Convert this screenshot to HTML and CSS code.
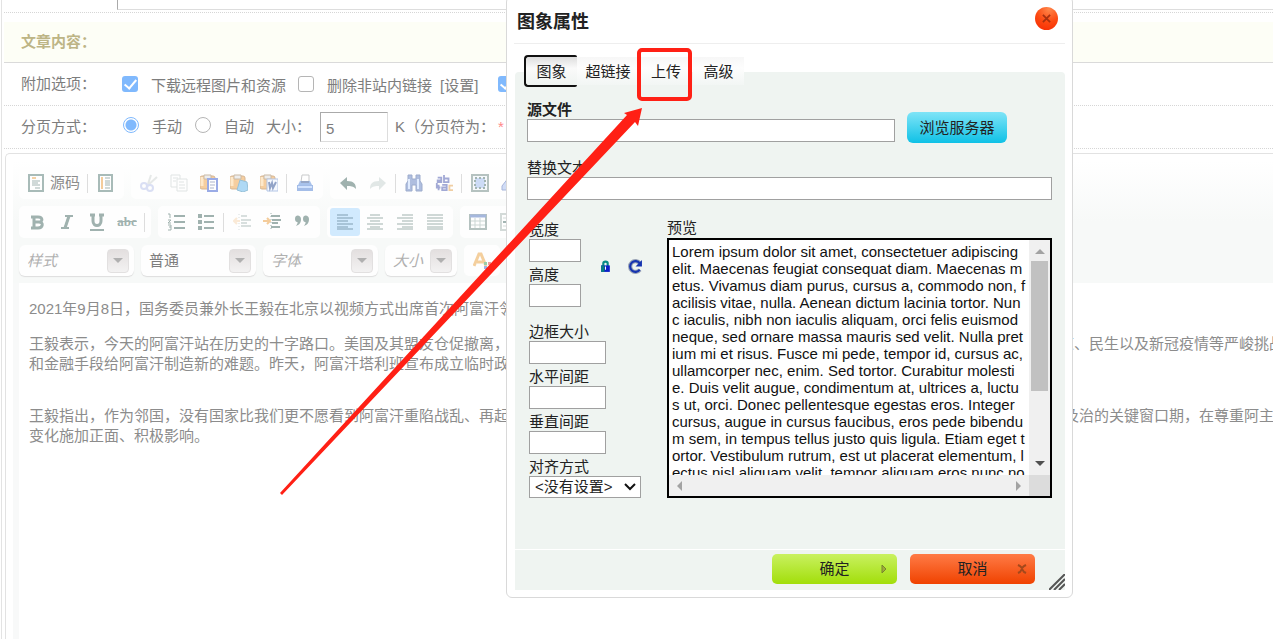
FILE: index.html
```html
<!DOCTYPE html>
<html lang="zh-CN">
<head>
<meta charset="utf-8">
<title>图象属性</title>
<link rel="stylesheet" href="styles.css">
</head>
<body>
<main class="page">
  <div class="top-row"><div class="top-field"></div></div>
  <h2 class="section-title">文章内容：</h2>
  <div class="option-row">
    <span class="option-name">附加选项：</span>
    <input class="check" type="checkbox" id="fetch" checked><label class="opt-fetch" for="fetch">下载远程图片和资源</label>
    <input class="check" type="checkbox" id="strip"><label class="opt-strip" for="strip">删除非站内链接</label>
    <a class="setting" href="#">[设置]</a>
    <input class="check" type="checkbox" id="extra" aria-label="其他" checked>
  </div>
  <div class="option-row">
    <span class="option-name">分页方式：</span>
    <input class="radio" type="radio" name="paging" id="manual" checked><label class="opt-radio" for="manual">手动</label>
    <input class="radio" type="radio" name="paging" id="auto"><label class="opt-radio" for="auto">自动</label>
    <label class="opt-size" for="size">大小：</label>
    <input class="size-input" id="size" type="text" value="5">
    <span class="size-unit">K（分页符为：</span><span class="mark">*</span>
  </div>

  <section class="editor">
    <div class="toolbars">
      <div class="toolbar">
        <div class="group">
          <button class="tool source"><svg viewBox="0 0 18 18"><path d="M2 1h14v16H2z" fill="#fff" stroke="#557a75" stroke-width="2"/><path d="M5 4h4" stroke="#eaa550" stroke-width="2"/><path d="M5 7h8M5 9h6M5 11h8M8 14h5" stroke="#486d69"/></svg>源码</button>
          <i class="sep"></i>
          <button class="tool" aria-label="模板"><svg viewBox="0 0 18 18"><path d="M2 1h13v16H2z" fill="#fff" stroke="#557a75" stroke-width="2"/><path d="M5 3v12" stroke="#eb9b3b" stroke-width="2"/><path d="M8 4h5M8 7h5M8 9h5M8 11h5M8 14h5" stroke="#486d69"/></svg></button>
        </div>
        <div class="group">
          <button class="tool dim" aria-label="剪切"><svg viewBox="0 0 18 18"><path d="M11 1L8 10M17 3L7 12" stroke="#8b9794" stroke-width="2"/><circle cx="4" cy="12" r="3" fill="none" stroke="#4d66cd" stroke-width="2"/><circle cx="10" cy="14" r="3" fill="none" stroke="#4d66cd" stroke-width="2"/></svg></button>
          <button class="tool dim" aria-label="复制"><svg viewBox="0 0 18 18" fill="#fff" stroke="#708580"><path d="M1 1h9v12H1z"/><path d="M7 5h10v12H7z"/><path d="M3 4h5M3 7h3M9 8h5M9 11h6M9 14h6"/></svg></button>
          <button class="tool" aria-label="粘贴"><svg viewBox="0 0 18 18"><rect x="0" y="2" width="15" height="13" rx="2" fill="#ef9f42" stroke="#ad7130"/><path d="M2 3v9" stroke="#ffd599" stroke-width="3"/><path d="M4 1h7v4H4z" fill="#ddd" stroke="#99794f"/><path d="M8 5h9v12H8z" fill="#fff" stroke="#395bd0" stroke-width="2"/><path d="M10 8h5M10 11h5M10 14h4" stroke="#5d6d9b"/></svg></button>
          <button class="tool" aria-label="粘贴为文本"><svg viewBox="0 0 18 18"><rect x="0" y="2" width="15" height="13" rx="2" fill="#ef9f42" stroke="#ad7130"/><path d="M2 3v9" stroke="#ffd599" stroke-width="3"/><path d="M4 1h7v4H4z" fill="#ddd" stroke="#99794f"/><path d="M10 6l7 2 1 8-5 2-6-2z" fill="#63b6ee" stroke="#3285b4"/></svg></button>
          <button class="tool" aria-label="从 Word 粘贴"><svg viewBox="0 0 18 18"><rect x="0" y="2" width="15" height="13" rx="2" fill="#ef9f42" stroke="#ad7130"/><path d="M2 3v9" stroke="#ffd599" stroke-width="3"/><path d="M4 1h7v4H4z" fill="#ddd" stroke="#99794f"/><path d="M7 5h11v12H7z" fill="#f0f5ff" stroke="#6b8fd0"/><path d="M9 8l1 6 2-5 1 5 3-6" fill="none" stroke="#284c94" stroke-width="2"/></svg></button>
          <i class="sep"></i>
          <button class="tool" aria-label="打印"><svg viewBox="0 0 18 18"><path d="M6 1h7v7H5z" fill="#fff" stroke="#96989b"/><path d="M4 7h10l3 6H1z" fill="#5588d9"/><path d="M5 8h8" stroke="#335291" stroke-width="2"/><path d="M1 11h16v6H1z" fill="#4d7ed3"/><path d="M2 13h14" stroke="#a8c9ff" stroke-width="2"/></svg></button>
        </div>
        <div class="group">
          <button class="tool" aria-label="撤销"><svg viewBox="0 0 18 18"><path d="M1 9l7-6v4c7 0 9 3 9 8-3-3-5-3-9-3v4z" fill="#446963"/></svg></button>
          <button class="tool dim" aria-label="重做"><svg viewBox="0 0 18 18"><path d="M17 9l-7-6v4c-7 0-9 3-9 8 3-3 5-3 9-3v4z" fill="#71918b"/></svg></button>
          <i class="sep"></i>
          <button class="tool" aria-label="查找"><svg viewBox="0 0 18 18"><path d="M3 1h4v4h4V1h4v6l2 3v7h-6v-6H7v6H1v-7l2-3z" fill="#637fc2" stroke="#415e9c"/><path d="M4 5v10M13 5v10" stroke="#c6dbff" stroke-width="2"/></svg></button>
          <button class="tool" aria-label="替换"><svg viewBox="0 0 20 18" fill="none" stroke="#4856ad" stroke-width="2"><path d="M3 3h4v5H3V6h4M10 0v8h5V4h-5M8 11h5v6H8v-3h5M2 9v5h4M4 11v6"/><path d="M20 12h-4v5h4" stroke="#e4a04a"/></svg></button>
          <i class="sep"></i>
          <button class="tool" aria-label="全选"><svg viewBox="0 0 18 18"><path d="M1 1h16v16H1z" fill="#edf3fa" stroke="#6f8883" stroke-width="2"/><path d="M4 4h10v10H4z" fill="#9cb9ef" stroke="#486d69" stroke-width="2" stroke-dasharray="2 2"/></svg></button>
          <button class="tool" aria-label="清除格式"><svg viewBox="0 0 18 18"><path d="M1 12L8 3l9 4-6 9H1z" fill="#a4bbef" stroke="#526eb9"/></svg></button>
        </div>
      </div>
      <div class="toolbar">
        <div class="group">
          <button class="tool" aria-label="加粗"><svg viewBox="0 0 18 18"><path d="M3 4h7c5 0 5 5 1 5 5 0 4 6-1 6H3M6 3v12M6 9h5" fill="none" stroke="#446963" stroke-width="3"/></svg></button>
          <button class="tool" aria-label="倾斜"><svg viewBox="0 0 18 18"><path d="M7 3h8M3 15h8M11 3L7 15" stroke="#446963" stroke-width="2"/><path d="M11 3L7 15" stroke="#446963" stroke-width="3"/></svg></button>
          <button class="tool" aria-label="下划线"><svg viewBox="0 0 18 18"><path d="M5 2v6c0 6 8 6 8 0V2M2 2h5M11 2h5" fill="none" stroke="#446963" stroke-width="3"/><path d="M2 17h14" stroke="#446963" stroke-width="2"/></svg></button>
          <button class="tool" aria-label="删除线"><s class="strike">abc</s></button>
          <i class="sep"></i>
        </div>
        <div class="group">
          <button class="tool" aria-label="编号列表"><svg viewBox="0 0 18 18" fill="none" stroke="#446963"><path d="M7 3h11M7 9h11M7 15h11" stroke-width="2"/><path d="M1 1h2v4M1 7h3L1 10h3M1 12h3v5H1M2 14h2"/></svg></button>
          <button class="tool" aria-label="项目列表"><svg viewBox="0 0 18 18" stroke="#446963"><path d="M7 3h10M7 9h10M7 15h10" stroke-width="2"/><path d="M1 3h4M1 9h4M1 15h4" stroke-width="4"/></svg></button>
          <i class="sep"></i>
          <button class="tool dim" aria-label="减少缩进"><svg viewBox="0 0 18 18"><path d="M8 3h6M8 7h10M8 10h6M8 13h10" stroke="#446963" stroke-width="2"/><path d="M6 1v16" stroke="#446963" stroke-dasharray="1 2"/><path d="M7 8H1M4 5L1 8l3 3" fill="none" stroke="#eb9b3b" stroke-width="2"/></svg></button>
          <button class="tool" aria-label="增加缩进"><svg viewBox="0 0 18 18"><path d="M8 3h9M9 7h9M9 10h6M8 14h9" stroke="#446963" stroke-width="2"/><path d="M8 0v18" stroke="#446963" stroke-dasharray="1 2"/><path d="M0 8h6M4 5l3 3-3 3" fill="none" stroke="#eb9b3b" stroke-width="2"/></svg></button>
          <button class="tool" aria-label="引用"><svg viewBox="0 0 18 18" fill="#446963"><path d="M2 6c0-5 6-4 6 0 0 4-2 6-5 7 2-3 2-4 1-4-1 0-2-1-2-3M10 6c0-5 6-4 6 0 0 4-2 6-5 7 2-3 2-4 1-4-1 0-2-1-2-3"/></svg></button>
        </div>
        <div class="group">
          <button class="tool on" aria-label="左对齐"><svg viewBox="0 0 18 18"><path d="M1 2h11M1 5h16M1 8h11M1 11h16M1 14h11M1 16h16" stroke="#31546a"/></svg></button>
          <button class="tool" aria-label="居中"><svg viewBox="0 0 18 18"><path d="M4 2h10M1 5h16M4 8h10M1 11h16M4 14h10M1 16h16" stroke="#446963"/></svg></button>
          <button class="tool" aria-label="右对齐"><svg viewBox="0 0 18 18"><path d="M6 2h11M1 5h16M6 8h11M1 11h16M6 14h11M1 16h16" stroke="#446963"/></svg></button>
          <button class="tool" aria-label="两端对齐"><svg viewBox="0 0 18 18"><path d="M1 2h16M1 5h16M1 8h16M1 11h16M1 14h16M1 16h16" stroke="#446963"/></svg></button>
        </div>
        <div class="group">
          <button class="tool" aria-label="表格"><svg viewBox="0 0 18 18"><path d="M1 2h16v14H1z" fill="#fff" stroke="#6f8883" stroke-width="2"/><path d="M1 3h16" stroke="#4e72be" stroke-width="3"/><path d="M2 8h14M2 12h14M6 5v10M11 5v10" stroke="#9bb0ac"/></svg></button>
          <button class="tool" aria-label="水平线"><svg viewBox="0 0 18 18"><path d="M2 1h14v16H2z" fill="#fff" stroke="#aab7b4" stroke-width="2"/><path d="M4 5h9M4 13h9" stroke="#aab7b4"/><path d="M4 9h10" stroke="#486d69" stroke-width="2"/></svg></button>
        </div>
      </div>
      <div class="toolbar combos">
        <button class="combo"><em>样式</em><span class="drop"></span></button>
        <button class="combo"><span>普通</span><span class="drop"></span></button>
        <button class="combo"><em>字体</em><span class="drop"></span></button>
        <button class="combo small"><em>大小</em><span class="drop"></span></button>
        <div class="group">
          <button class="tool" aria-label="文本颜色"><svg viewBox="0 0 18 18"><path d="M1 14L6 2h2l5 12M4 10h6" fill="none" stroke="#eba13e" stroke-width="3"/><path d="M11 10h3v3h-3z" fill="#3c9d54"/><path d="M15 10h3v3h-3z" fill="#df4343"/><path d="M11 14h3v3h-3z" fill="#406bd0"/></svg></button>
        </div>
      </div>
    </div>
    <article class="content">
      <p><span>2021年9月8日，国务委员兼外长王毅在北京以视频方式出席首次阿富汗邻</span></p>
      <p><span>王毅表示，今天的阿富汗站在历史的十字路口。美国及其盟友仓促撤离，</span><span>道、民生以及新冠疫情等严峻挑战</span></p>
      <p class="next-line"><span>和金融手段给阿富汗制造新的难题。昨天，阿富汗塔利班宣布成立临时政</span></p>
      <p class="later"><span>王毅指出，作为邻国，没有国家比我们更不愿看到阿富汗重陷战乱、再起</span><span>及治的关键窗口期，在尊重阿主</span></p>
      <p class="next-line"><span>变化施加正面、积极影响。</span></p>
    </article>
  </section>
</main>

<div class="dialog" role="dialog" aria-labelledby="dialog-title">
  <header class="dialog-head">
    <h1 id="dialog-title">图象属性</h1>
    <button class="close" aria-label="关闭"><svg viewBox="0 0 10 10"><path d="M1 1l8 8M9 1l-8 8" stroke="#a8300f" stroke-width="2"/></svg></button>
  </header>
  <nav class="tabs">
    <button class="tab active">图象</button><button class="tab link-tab">超链接</button><button class="tab upload-tab">上传</button><button class="tab">高级</button>
  </nav>
  <div class="panel">
    <div class="url-row">
      <div class="field"><label class="strong" for="url">源文件</label><input id="url" type="text"></div>
      <button class="browse">浏览服务器</button>
    </div>
    <div class="field alt-field"><label for="alt">替换文本</label><input id="alt" type="text"></div>
    <div class="columns">
      <div class="metrics">
        <div class="dims">
          <div>
            <div class="field narrow"><label for="w">宽度</label><input id="w" type="text"></div>
            <div class="field narrow"><label for="h">高度</label><input id="h" type="text"></div>
          </div>
          <button class="mini" aria-label="锁定比例"><svg viewBox="0 0 10 12"><path d="M3 6V3c0-2 4-2 4 0v3" fill="none" stroke="#078b87" stroke-width="2"/><path d="M1 5h8v6H1z" fill="#0b1ec8"/><path d="M1 5h3v6H1z" fill="#087f80"/><path d="M5 6v3" stroke="#fff"/></svg></button>
          <button class="mini reset" aria-label="原始尺寸"><svg viewBox="0 0 14 14"><path d="M11 10a5 5 0 1 1 0-6" fill="none" stroke="#9aa4b6" stroke-width="4"/><path d="M11 10a5 5 0 1 1 0-6" fill="none" stroke="#1634b0" stroke-width="2"/><path d="M13 1v6H7z" fill="#1634b0"/></svg></button>
        </div>
        <div class="field wide"><label for="border">边框大小</label><input id="border" type="text"></div>
        <div class="field wide"><label for="hs">水平间距</label><input id="hs" type="text"></div>
        <div class="field wide"><label for="vs">垂直间距</label><input id="vs" type="text"></div>
        <div class="field"><label for="align">对齐方式</label>
          <div class="select-wrap"><select id="align"><option>&lt;没有设置&gt;</option></select><svg viewBox="0 0 12 8"><path d="M1 1l5 5 5-5" fill="none" stroke="#111" stroke-width="2"/></svg></div>
        </div>
      </div>
      <div class="preview-col">
        <div class="preview-label">预览</div>
        <div class="preview">
          <div class="preview-text">Lorem ipsum dolor sit amet, consectetuer adipiscing
elit. Maecenas feugiat consequat diam. Maecenas m
etus. Vivamus diam purus, cursus a, commodo non, f
acilisis vitae, nulla. Aenean dictum lacinia tortor. Nun
c iaculis, nibh non iaculis aliquam, orci felis euismod
neque, sed ornare massa mauris sed velit. Nulla pret
ium mi et risus. Fusce mi pede, tempor id, cursus ac,
ullamcorper nec, enim. Sed tortor. Curabitur molesti
e. Duis velit augue, condimentum at, ultrices a, luctu
s ut, orci. Donec pellentesque egestas eros. Integer
cursus, augue in cursus faucibus, eros pede bibendu
m sem, in tempus tellus justo quis ligula. Etiam eget t
ortor. Vestibulum rutrum, est ut placerat elementum, l
ectus nisl aliquam velit, tempor aliquam eros nunc no</div>
          <div class="vbar"><svg viewBox="0 0 10 5"><path d="M0 5l5-5 5 5z" fill="#a3a3a3"/></svg><i class="thumb"></i><svg class="down" viewBox="0 0 10 5"><path d="M0 0l5 5 5-5z" fill="#505050"/></svg></div>
          <div class="hbar"><svg viewBox="0 0 5 10"><path d="M5 0L0 5l5 5z" fill="#a3a3a3"/></svg><svg viewBox="0 0 5 10"><path d="M0 0l5 5-5 5z" fill="#a3a3a3"/></svg></div>
          <div class="corner"></div>
        </div>
      </div>
    </div>
  </div>
  <footer class="dialog-foot">
    <button class="action ok">确定<svg viewBox="0 0 10 10"><path d="M3 1v8l4-4z" fill="#a0aa3c" stroke="#77852c"/></svg></button>
    <button class="action cancel">取消<svg viewBox="0 0 10 10"><path d="M1 1l2 1 2 2 2-2 2-1M1 9l2-1 2-3 2 3 2 1" fill="none" stroke="#a4481b" stroke-width="2"/></svg></button>
    <svg class="grip" viewBox="0 0 16 16"><path d="M0 16L16 0M5 16L16 5M10 16l6-6" stroke="#555" stroke-width="2"/></svg>
  </footer>
</div>

<svg class="annotation" width="700" height="500" viewBox="0 0 700 500" aria-hidden="true">
  <rect x="639" y="50" width="51" height="49" rx="3" fill="none" stroke="#ff2015" stroke-width="4"/>
  <path d="M642 108L638 126L635 122L282 495L280 493L627 115L624 113z" fill="#ff2015"/>
</svg>
</body>
</html>
```
FILE: styles.css
```css
* { box-sizing: border-box; }
html { overflow: hidden; }
body {
  margin: 0;
  height: 100vh;
  overflow: hidden;
  position: relative;
  background: #fff;
  font: 15px/20px "Liberation Sans", "Noto Sans CJK SC", sans-serif;
  color: #222;
}
button, input, select { font: inherit; color: inherit; margin: 0; }
button { border: 0; padding: 0; background: none; }
svg { display: block; }

.page {
  margin-left: 1px;
  padding-left: 2px;
  border-left: 1px solid #e3e3e3;
  min-height: 100vh;
  display: flex;
  flex-direction: column;
  color: #7d7d7d;
}
.top-row { height: 13px; border-bottom: 1px dotted #d6d6d6; padding-left: 113px; }
.top-field { height: 10px; border-left: 1px solid #aaa; border-bottom: 1px solid #ddd; }
.section-title {
  margin: 9px 0 0;
  height: 41px;
  padding-left: 17px;
  border-bottom: 1px solid #dadada;
  background: #fdfef6;
  color: #bdb586;
  font-size: 15px;
  line-height: 40px;
}
.option-row {
  height: 43px;
  padding-left: 17px;
  border-bottom: 1px dotted #d6d6d6;
  display: flex;
  align-items: center;
  white-space: nowrap;
}
.option-name { width: 101px; }
.check, .radio {
  appearance: none;
  flex: none;
  width: 16px;
  height: 16px;
  border: 1px solid #b5b5b5;
  border-radius: 3px;
  background: #fff;
}
.check:checked {
  border: 0;
  background: #80b9fd;
  display: grid;
  justify-items: center;
}
.check:checked::after {
  content: "";
  width: 5px;
  height: 10px;
  margin-top: 1px;
  border: solid #fff;
  border-width: 0 2px 2px 0;
  transform: rotate(40deg);
}
.radio { border-radius: 50%; margin: 0 13px 4px 1px; }
.radio:checked { border-color: #80b9fd; background: radial-gradient(circle, #80b9fd 5px, #fff 6px); }
.opt-fetch, .opt-strip, .setting { padding-top: 3px; }
.opt-fetch, .opt-strip { padding-left: 13px; }
.opt-fetch { margin-right: 12px; }
.setting { color: inherit; text-decoration: none; margin: 0 20px 0 8px; }
.opt-radio { margin-right: 12px; }
.opt-size { width: 54px; }
.size-input {
  width: 68px;
  height: 30px;
  padding: 2px 5px 0;
  border: 1px solid #ddd;
  border-top-color: #aaa;
  border-left-color: #aaa;
}
.size-unit { padding-left: 7px; }
.mark { margin-left: 3px; color: #f88; }

.editor {
  flex: 1;
  margin: 4px 0 0 1px;
  padding: 7px 0 0 7px;
  border: 1px solid #e2e2e2;
  border-width: 1px 0 0 1px;
  border-radius: 5px 0 0 0;
  display: flex;
  flex-direction: column;
}
.toolbars {
  padding: 6px 0 7px 6px;
  background: linear-gradient(#fff, #f7f9f8 50%);
  display: flex;
  flex-direction: column;
  gap: 7px;
}
.toolbar { display: flex; gap: 7px; }
.group {
  height: 32px;
  padding: 0 3px;
  border-radius: 5px;
  background: #fefefe;
  display: flex;
  align-items: center;
}
.tool {
  width: 30px;
  height: 28px;
  display: flex;
  align-items: center;
  justify-content: center;
  border-radius: 3px;
  color: #8c8c8c;
}
.tool svg { width: 18px; height: 18px; opacity: 0.5; flex: none; }
.tool.dim svg { opacity: 0.2; }
.tool.on { background: #d1eafe; }
.tool.source { width: 63px; gap: 5px; }
.strike { color: #a0b2af; font: bold 13px/16px "Liberation Serif", serif; }
.sep { width: 1px; height: 19px; margin: 0 3px 0 2px; background: #ddd; }
.combo {
  width: 115px;
  height: 31px;
  padding: 0 5px 0 8px;
  border-radius: 6px;
  background: #fefefe;
  box-shadow: 0 1px 1px #ddd;
  display: flex;
  align-items: center;
  justify-content: space-between;
}
.combos .group { height: 31px; }
.combo.small { width: 72px; }
.combo em { color: #b0b0b0; }
.drop {
  width: 22px;
  height: 24px;
  border: 1px solid #e2e0e0;
  border-radius: 4px;
  background: linear-gradient(#e3dfdf, #f3f2f2);
  display: grid;
  place-items: center;
}
.drop::after { content: ""; border: 5px solid transparent; border-top-color: #b0b0b0; border-bottom: 0; }

.content {
  flex: 1;
  padding: 16px 0 0 10px;
  border-left: 6px solid #f8f9f9;
  color: #8c8c8c;
}
.content p {
  margin: 0 0 15px;
  display: grid;
  grid-template-columns: 1030px 1fr;
  white-space: nowrap;
  overflow: hidden;
}
.content p.next-line { margin-top: -15px; }
.content p.later { margin-top: 32px; grid-template-columns: 1035px 1fr; }

.dialog {
  position: absolute;
  top: -4px;
  left: 506px;
  width: 567px;
  padding: 5px 7px 7px 8px;
  border: 1px solid #d9d9d9;
  border-radius: 6px;
  background: #fff;
}
.dialog-head {
  height: 42px;
  margin-left: -1px;
  padding: 0 7px 2px 3px;
  border-bottom: 1px solid #eee;
  display: flex;
  justify-content: space-between;
  align-items: center;
}
.dialog-head h1 { margin: 0; font-size: 18px; line-height: 24px; }
.close {
  width: 23px;
  height: 23px;
  margin-bottom: 6px;
  border-radius: 50%;
  background: radial-gradient(circle at 60% 10%, #ff874b, #fc4a12 50%, #f52700);
  display: grid;
  place-items: center;
}
.close svg { width: 9px; height: 9px; }
.tabs {
  display: flex;
  height: 32px;
  margin: 11px 0 -15px 9px;
  position: relative;
}
.tab {
  height: 28px;
  width: 51px;
  margin: 2px 0 0 1px;
  padding-top: 2px;
  background: linear-gradient(#f7f7f7, #fdfdfd 40%, #f2f6f4);
}
.tab.active {
  height: 32px;
  width: 53px;
  margin: 0;
  padding-top: 2px;
  border: 2px solid #111;
  border-right: 0;
  border-radius: 4px 2px 2px 4px;
  background: linear-gradient(#ddd, #fafafa 40%, #eff4f1);
}
.tab.link-tab { width: 62px; margin-left: 0; }
.tab.upload-tab { width: 52px; }
.panel {
  height: 477px;
  padding: 27px 13px 0 12px;
  border-radius: 4px 4px 0 0;
  background: #eff4f1;
}
.field { display: flex; flex-direction: column; align-items: flex-start; }
.field label { height: 22px; line-height: 26px; }
.field input {
  width: 100%;
  height: 23px;
  padding: 0 3px;
  border: 1px solid #a0a0a0;
  background: #fff;
}
.strong { font-weight: bold; }
.url-row { display: flex; gap: 12px; align-items: flex-end; padding-right: 45px; }
.url-row .field { flex: 1; margin-top: -2px; }
.browse {
  width: 100px;
  height: 31px;
  border-radius: 6px;
  background: linear-gradient(#7fe4f7, #0fc1e6);
  margin-bottom: -1px;
}
.alt-field { margin-top: 13px; }
.columns { display: flex; justify-content: space-between; padding: 17px 0 0 2px; }
.narrow { width: 52px; }
.wide { width: 77px; }
.dims { display: flex; align-items: center; margin-bottom: 12px; }
.mini { margin: 8px 0 0 19px; }
.mini svg { width: 11px; height: 13px; }
.mini.reset { margin-left: 17px; }
.mini.reset svg { width: 15px; height: 15px; }
.select-wrap { display: grid; width: 112px; align-items: center; }
.select-wrap select {
  grid-area: 1 / 1;
  appearance: none;
  height: 22px;
  border: 1px solid #a0a0a0;
  border-radius: 0;
  background: #fff;
  padding: 0 5px;
}
.select-wrap svg { grid-area: 1 / 1; justify-self: end; width: 12px; height: 8px; margin-right: 5px; pointer-events: none; }
.preview-label { height: 21px; line-height: 22px; }
.preview {
  width: 385px;
  height: 260px;
  border: 2px solid #000;
  background: #fff;
  display: grid;
  grid-template: 1fr 21px / 1fr 21px;
}
.preview-text {
  height: 235px;
  padding: 3px 0 0 3px;
  overflow: hidden;
  white-space: pre;
  line-height: 17px;
  color: #111;
}
.vbar { background: #f0f0f0; display: flex; flex-direction: column; align-items: center; padding: 9px 0; }
.vbar svg { width: 10px; height: 5px; }
.vbar .down { margin-top: auto; }
.thumb { width: 17px; height: 130px; margin-top: 7px; background: #c1c1c1; }
.hbar { background: #f0f0f0; display: flex; align-items: center; justify-content: space-between; padding: 0 8px; }
.hbar svg { width: 5px; height: 10px; }
.corner { background: #dcdcdc; }
.dialog-foot {
  height: 40px;
  margin-top: 1px;
  padding: 4px 30px 0;
  background: #eff4f1;
  display: flex;
  justify-content: flex-end;
  gap: 13px;
  position: relative;
}
.action {
  width: 125px;
  height: 30px;
  border-radius: 5px;
  display: grid;
  grid-template-columns: 1fr auto 1fr;
  align-items: center;
}
.action::before { content: ""; }
.action svg { width: 10px; height: 10px; justify-self: end; margin-right: 8px; }
.ok { background: linear-gradient(#c9f160, #a2de0a); }
.cancel { background: linear-gradient(#ff7b46, #f04200); }
.grip { position: absolute; right: 0; bottom: 0; width: 16px; height: 16px; }
.annotation { position: absolute; left: 0; top: 0; pointer-events: none; }
```
